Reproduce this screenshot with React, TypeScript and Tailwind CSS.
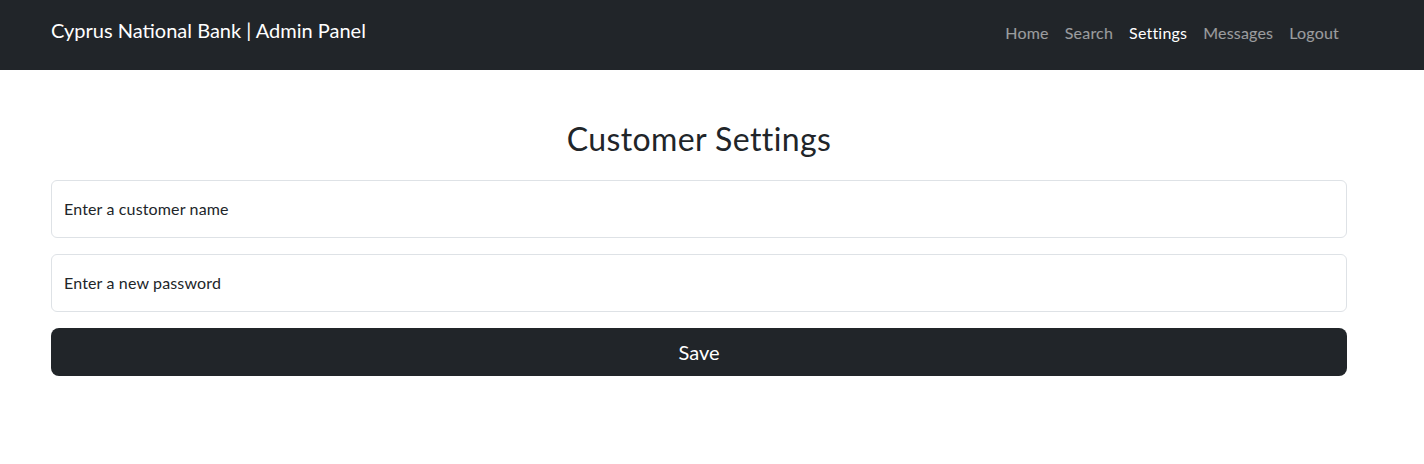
export default function App() {
  const links = ['Home', 'Search', 'Settings', 'Messages', 'Logout'];
  return (
    <div className="min-h-[464px] bg-white text-[#212529]" style={{ fontFamily: 'Lato, "Noto Sans", sans-serif' }}>
      <nav className="h-[70px] bg-[#212529] flex items-start justify-between pl-[51px] pr-[77px] pt-[15px]">
        <a className="text-[20px] leading-[30px] text-white">Cyprus National Bank | Admin Panel</a>
        <ul className="flex mt-[6px]">
          {links.map((l) => (
            <li key={l}>
              <a className={`px-2 text-[16px] leading-6 tracking-[0.2px] ${l === 'Settings' ? 'text-white' : 'text-white/55'}`}>{l}</a>
            </li>
          ))}
        </ul>
      </nav>
      <main className="pl-[51px] pr-[77px]">
        <h2 className="mt-[50px] mb-[22px] text-center text-[32px] leading-[38px] tracking-[0.4px]">Customer Settings</h2>
        <form className="flex flex-col gap-4">
          <input
            className="h-[58px] w-full rounded-md border border-[#dee2e6] px-3 pb-px text-[16px] tracking-[0.15px] placeholder:text-[#212529] outline-none"
            placeholder="Enter a customer name"
          />
          <input
            type="password"
            className="h-[58px] w-full rounded-md border border-[#dee2e6] px-3 pb-px text-[16px] tracking-[0.15px] placeholder:text-[#212529] outline-none"
            placeholder="Enter a new password"
          />
          <button type="button" className="h-[48px] w-full rounded-lg bg-[#212529] text-[20px] text-white">
            Save
          </button>
        </form>
      </main>
    </div>
  );
}
